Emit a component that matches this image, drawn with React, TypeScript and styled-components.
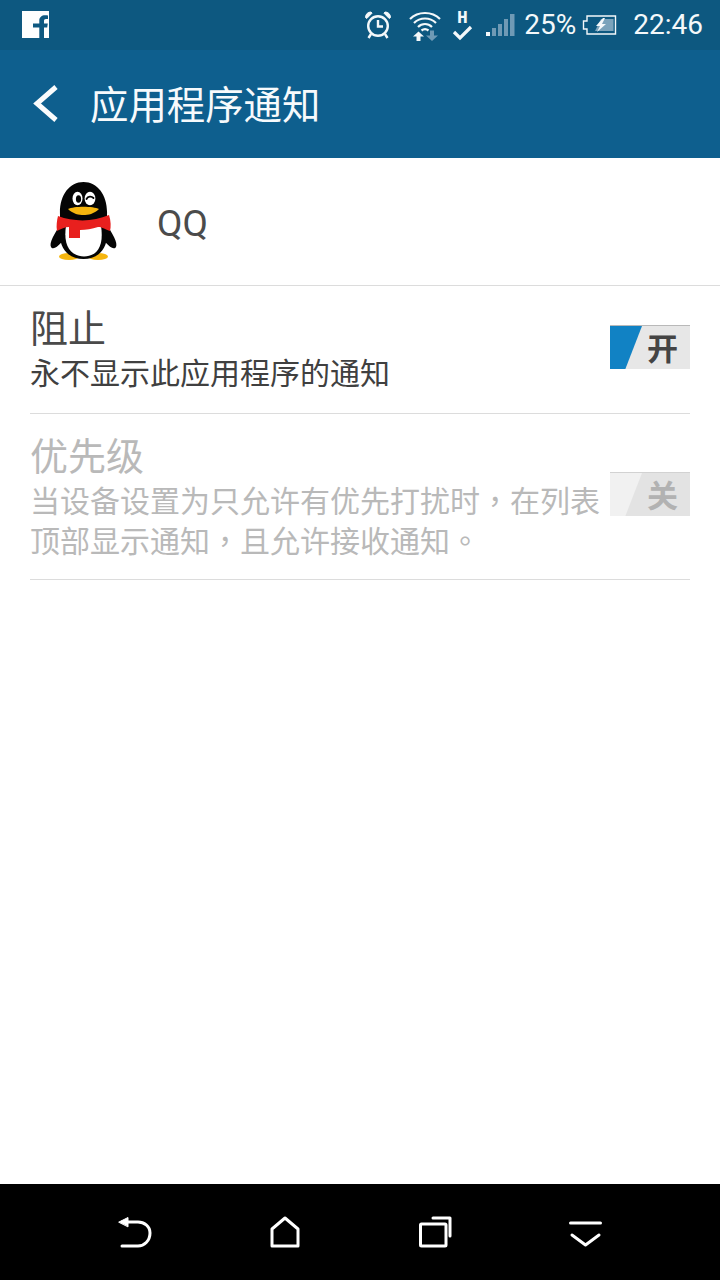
import React from "react";
import styled, { createGlobalStyle } from "styled-components";

const cjk = `"Noto Sans CJK SC", "Noto Sans", sans-serif`;

const Global = createGlobalStyle`
  html, body { margin: 0; padding: 0; background: #fff; }
  #root { width: 720px; }
`;

const Screen = styled.div`
  width: 720px;
  height: 1280px;
  display: flex;
  flex-direction: column;
  background: #fff;
  font-family: ${cjk};
`;

const StatusBar = styled.div`
  height: 50px;
  background: #0d5880;
  display: flex;
  align-items: center;
  padding: 0 17px 0 22px;
  color: #f4f8fa;
  font-family: Roboto, sans-serif;
  font-size: 28px;
  flex: none;
`;

const Spacer = styled.div`
  flex: 1;
`;

const StatusIcon = styled.svg<{ $gap?: number }>`
  display: block;
  flex: none;
  margin-left: ${(p) => p.$gap ?? 0}px;
`;

const StatusText = styled.span<{ $gap: number }>`
  margin-left: ${(p) => p.$gap}px;
  line-height: 50px;
`;

const Header = styled.header`
  height: 108px;
  background: #0e5f8e;
  display: flex;
  align-items: center;
  padding-left: 30px;
  flex: none;
`;

const BackIcon = styled.svg`
  display: block;
  flex: none;
`;

const HeaderTitle = styled.h1`
  margin: 0 0 4px 30px;
  font-size: 38.4px;
  line-height: 44px;
  font-weight: 400;
  color: #f7fafc;
`;

const AppRow = styled.div`
  height: 127px;
  display: flex;
  align-items: center;
  padding-left: 44px;
  border-bottom: 1px solid #dcdcdc;
  flex: none;
`;

const PenguinIcon = styled.svg`
  display: block;
  flex: none;
`;

const AppName = styled.span`
  margin-left: 33px;
  padding-top: 4px;
  font-family: Roboto, sans-serif;
  font-size: 37px;
  color: #4b4b4b;
`;

const List = styled.main`
  flex: 1;
  padding: 0 30px;
`;

const SettingRow = styled.section<{ $bottom: number }>`
  display: flex;
  align-items: center;
  padding: 20px 0 ${(p) => p.$bottom}px;
  border-bottom: 1px solid #dcdcdc;
`;

const SettingText = styled.div`
  width: 580px;
  flex: none;
`;

const SettingTitle = styled.div<{ $off?: boolean }>`
  font-size: 38px;
  line-height: 40px;
  color: ${(p) => (p.$off ? "#b9b9b9" : "#4a4a4a")};
`;

const SettingDesc = styled.div<{ $off?: boolean }>`
  width: 570px;
  margin-top: 5px;
  font-size: 30px;
  line-height: 40px;
  color: ${(p) => (p.$off ? "#b9b9b9" : "#404040")};
`;

const DescLine = styled.div`
  height: 40px;
  white-space: nowrap;
`;

const Punct = styled.span`
  display: inline-block;
  font-family: "Noto Sans CJK TC", sans-serif;
  line-height: 30px;
`;

const Toggle = styled.div<{ $on?: boolean; $lift: number }>`
  position: relative;
  width: 80px;
  height: 44px;
  margin-bottom: ${(p) => p.$lift}px;
  flex: none;
  box-sizing: border-box;
  display: flex;
  align-items: center;
  justify-content: flex-end;
  padding: 0 12px 2px 0;
  background: ${(p) => (p.$on ? "#e7e7e7" : "#e3e3e3")};
  border-top: 1px solid ${(p) => (p.$on ? "#b9b9b9" : "#d2d2d2")};
  color: ${(p) => (p.$on ? "#444444" : "#b2b2b2")};
  font-size: 31px;
  font-weight: 700;
  line-height: 41px;
  &::before {
    content: "";
    position: absolute;
    left: 0;
    top: 0;
    bottom: 0;
    width: 32px;
    background: ${(p) => (p.$on ? "#1182c4" : "#f1f1f1")};
    clip-path: polygon(0 0, 100% 0, 48% 100%, 0 100%);
  }
`;

const NavBar = styled.nav`
  height: 96px;
  background: #000;
  display: flex;
  align-items: center;
  padding: 0 60px;
  flex: none;
`;

const NavButton = styled.div`
  flex: 1;
  display: flex;
  justify-content: center;
`;

const Penguin = () => (
  <PenguinIcon width="80" height="84" viewBox="44 180 80 84">
    <ellipse cx="69" cy="256.5" rx="10" ry="3.6" fill="#f5b50e" />
    <ellipse cx="98" cy="256.5" rx="10" ry="3.6" fill="#f5b50e" />
    <path d="M62 222C54 234 49 243 51 247C53 251 60 245 63 240L104 240C107 245 114 251 116 247C118 243 113 234 105 222Z" fill="#050505" />
    <path d="M60 215C59 196 69 182 83.5 182C98 182 108 196 107 215L107 235C107 250 97 259 83.5 259C70 259 60 250 60 235Z" fill="#050505" />
    <path d="M66 226L101 226C104 245 98 256 84 256.5C70 256 63 245 66 226Z" fill="#fff" />
    <ellipse cx="77.5" cy="198.5" rx="5" ry="6.8" fill="#fff" />
    <ellipse cx="78.5" cy="199" rx="2.6" ry="3.8" fill="#050505" />
    <ellipse cx="90" cy="198.5" rx="5.4" ry="6.8" fill="#fff" />
    <path d="M86.5 199C88 196 91.5 196 93.5 198" fill="none" stroke="#050505" strokeWidth="1.8" strokeLinecap="round" />
    <path d="M68 209C74 206 93 206 99 209C94 214 88 215 83.5 215C79 215 73 214 68 209Z" fill="#f5b50e" />
    <path d="M58 216C74 222 93 222 109 215C111 221 111 227 110 231C104 229 102 227 98 227C92 229 86 230 80 230L80 238L69 238L69 227C65 227 61 229 57 231C56 226 57 220 58 216Z" fill="#e8201e" />
  </PenguinIcon>
);

const Facebook = () => (
  <StatusIcon width="28" height="28" viewBox="0 0 28 28">
    <path
      fill="#fdfefe"
      fillRule="evenodd"
      d="M0 0H27V27H22V16.5H25.2L25.8 12.5H22V10C22 8.8 22.5 8 24 8H26V4.5C25.3 4.4 24.2 4.3 23 4.3C19.8 4.3 17.3 6.2 17.3 9.6V12.5H11V16.5H17.3V27H0Z"
    />
  </StatusIcon>
);

const Alarm = () => (
  <StatusIcon width="28" height="30" viewBox="0 0 28 30" fill="none" stroke="#f4f8fa" strokeWidth="2.4">
    <circle cx="14" cy="16" r="9.8" />
    <path d="M14 10V16.5H19" />
    <path d="M1.5 7.5C1.5 4 4 2 7 2L8 3.2L2.8 8.5Z" fill="#f4f8fa" strokeWidth="1" />
    <path d="M26.5 7.5C26.5 4 24 2 21 2L20 3.2L25.2 8.5Z" fill="#f4f8fa" strokeWidth="1" />
    <path d="M7 24L4.5 28M21 24L23.5 28" />
  </StatusIcon>
);

const Wifi = () => (
  <StatusIcon $gap={17} width="32" height="32" viewBox="0 0 32 32" fill="none" stroke="#f4f8fa" strokeWidth="2.2">
    <path d="M1 10C9 2 23 2 31 10" />
    <path d="M5 14C11 8 21 8 27 14" />
    <path d="M9 18C13 14 19 14 23 18" />
    <path d="M12.5 21.5C14.5 20 17.5 20 19.5 21.5" />
    <path d="M9.5 22.5L15 27.5H11.5V32H7.5V27.5H4Z" fill="#f4f8fa" stroke="none" />
    <path d="M19 32L25 26.5H21V21.5H17V26.5H13Z" transform="translate(4 0)" fill="#6f9ab5" stroke="none" />
  </StatusIcon>
);

const HCheck = () => (
  <StatusIcon $gap={11} width="21" height="32" viewBox="0 0 21 32" fill="none">
    <text x="10.5" y="14" textAnchor="middle" fontFamily="'Liberation Mono', monospace" fontWeight="700" fontSize="18" fill="#f4f8fa">H</text>
    <path d="M2 23L8 29L19 18" stroke="#f4f8fa" strokeWidth="3.2" />
  </StatusIcon>
);

const Signal = () => (
  <StatusIcon $gap={13} width="29" height="23" viewBox="0 0 29 23">
    <rect x="0" y="18" width="4" height="4" fill="#f4f8fa" />
    <rect x="6" y="14" width="4" height="8" fill="#6f9ab5" />
    <rect x="12" y="10" width="4" height="12" fill="#6f9ab5" />
    <rect x="18" y="5" width="4" height="17" fill="#6f9ab5" />
    <rect x="24" y="0" width="4.5" height="22" fill="#6f9ab5" />
  </StatusIcon>
);

const Battery = () => (
  <StatusIcon $gap={6} width="35" height="20" viewBox="0 0 35 20">
    <path d="M5 1H33.5V19H5V14H1.5V6H5Z" fill="none" stroke="#f4f8fa" strokeWidth="1.4" />
    <path d="M19 4H31.5V16H13Z" fill="#7ba3bb" />
    <path d="M21 3L14 11H18L15 17L24 9H20L23 3Z" fill="#f4f8fa" />
  </StatusIcon>
);

const Back = () => (
  <BackIcon width="30" height="44" viewBox="0 0 30 44" fill="none" stroke="#fafcfd" strokeWidth="5">
    <path d="M26 5L7 21.5L26 38" />
  </BackIcon>
);

const NavIcon = styled.svg`
  display: block;
  fill: none;
  stroke: #fff;
  stroke-width: 3;
  stroke-linecap: round;
  stroke-linejoin: round;
`;

const App = () => (
  <Screen>
    <Global />
    <StatusBar>
      <Facebook />
      <Spacer />
      <Alarm />
      <Wifi />
      <HCheck />
      <Signal />
      <StatusText $gap={9}>25%</StatusText>
      <Battery />
      <StatusText $gap={16}>22:46</StatusText>
    </StatusBar>
    <Header>
      <Back />
      <HeaderTitle>应用程序通知</HeaderTitle>
    </Header>
    <AppRow>
      <Penguin />
      <AppName>QQ</AppName>
    </AppRow>
    <List>
      <SettingRow $bottom={22}>
        <SettingText>
          <SettingTitle>阻止</SettingTitle>
          <SettingDesc>永不显示此应用程序的通知</SettingDesc>
        </SettingText>
        <Toggle $on $lift={3}>开</Toggle>
      </SettingRow>
      <SettingRow $bottom={20}>
        <SettingText>
          <SettingTitle $off>优先级</SettingTitle>
          <SettingDesc $off>
            <DescLine>当设备设置为只允许有优先打扰时<Punct>，</Punct>在列表</DescLine>
            <DescLine>顶部显示通知<Punct>，</Punct>且允许接收通知<Punct>。</Punct></DescLine>
          </SettingDesc>
        </SettingText>
        <Toggle $lift={5}>关</Toggle>
      </SettingRow>
    </List>
    <NavBar>
      <NavButton>
        <NavIcon width="34" height="32" viewBox="0 0 34 32">
          <path d="M4 6H20C26 6 32 10 32 17C32 25 26 30 20 30H4" />
          <path d="M1 6L10 1.5V10.5Z" fill="#fff" strokeWidth="1" />
        </NavIcon>
      </NavButton>
      <NavButton>
        <NavIcon width="30" height="32" viewBox="0 0 30 32">
          <path d="M15 2L28 13V30H2V13Z" />
        </NavIcon>
      </NavButton>
      <NavButton>
        <NavIcon width="33" height="32" viewBox="0 0 33 32">
          <rect x="1.5" y="8" width="25.5" height="22" rx="1" />
          <path d="M14 2H31V20" />
        </NavIcon>
      </NavButton>
      <NavButton>
        <NavIcon width="33" height="32" viewBox="0 0 33 32">
          <path d="M1.5 7H31.5" />
          <path d="M3 19L16.5 29L30 19" />
        </NavIcon>
      </NavButton>
    </NavBar>
  </Screen>
);

export default App;
